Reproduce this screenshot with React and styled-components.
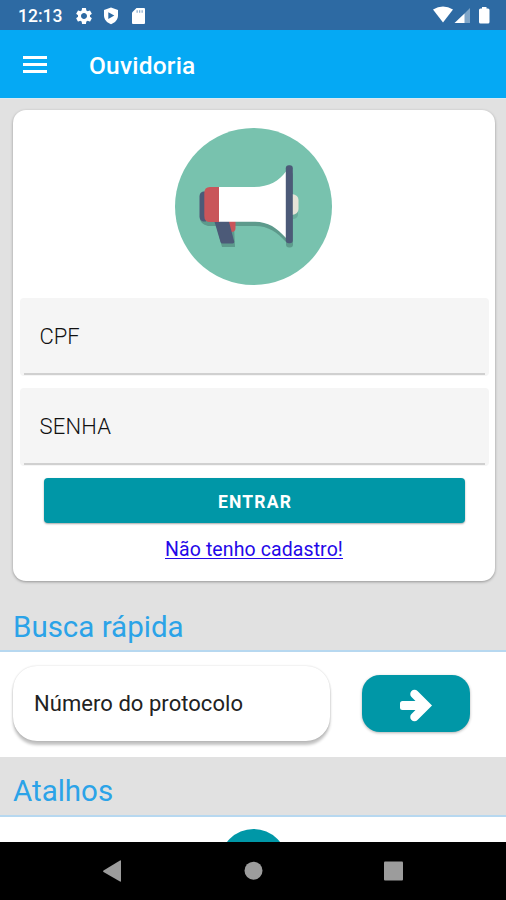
import React from 'react';
import styled, { createGlobalStyle } from 'styled-components';
import { MdSettings } from 'react-icons/md';

const App = () => {
  return (
    <>
      <GlobalStyle />
      <Screen>
        <StatusBar>
          <Clock>12:13</Clock>
          <StatusIcons>
            <MdSettings size={20} />
            <ShieldIcon />
            <SdIcon />
          </StatusIcons>
          <SignalIcons />
        </StatusBar>
        <AppBar>
          <MenuButton aria-label="Menu">
            <MenuLine />
            <MenuLine />
            <MenuLine />
          </MenuButton>
          <Title>Ouvidoria</Title>
        </AppBar>
        <Content>
          <LoginCard>
            <Megaphone />
            <Field>
              <Label>CPF</Label>
            </Field>
            <Field>
              <Label $spacing="0.2px">SENHA</Label>
            </Field>
            <EnterButton>ENTRAR</EnterButton>
            <SignUpLink href="#">Não tenho cadastro!</SignUpLink>
          </LoginCard>
          <SectionTitle $height={71} $pad={27}>Busca rápida</SectionTitle>
          <SearchRow>
            <ProtocolField>Número do protocolo</ProtocolField>
            <GoButton aria-label="Buscar">
              <ArrowIcon />
            </GoButton>
          </SearchRow>
          <SectionTitle $height={60} $pad={15}>Atalhos</SectionTitle>
          <Shortcuts>
            <ShortcutCircle />
          </Shortcuts>
        </Content>
        <NavBar>
          <svg width="506" height="58" viewBox="0 0 506 58" fill="#9c9c9c">
            <path d="M121 19v20q0 1-1 .5L103.500 30q-1-.8 0-1.600L120 18.500q1-.5 1 .5z" />
            <circle cx="253.500" cy="28.700" r="9" />
            <rect x="384" y="19.500" width="19" height="19" rx="1" />
          </svg>
        </NavBar>
      </Screen>
    </>
  )
}

const ShieldIcon = () => (
  <svg width="16" height="18" viewBox="0 0 16 18">
    <path d="M8 .5L15 3v5.500c0 4-3 7.300-7 8.700-4-1.400-7-4.700-7-8.700V3z" fill="#fff" />
    <path d="M5.300 5.300v6.600l6-3.300z" fill="#2d6aa3" />
  </svg>
)

const SdIcon = () => (
  <svg width="14" height="16" viewBox="-1 0 14 16">
    <path d="M4.500 0H12q1 0 1 1v14q0 1-1 1H1q-1 0-1-1V4.500z" fill="#fff" />
    <path d="M4.500 2.200h1.300v2.500H4.500zM7 2.200h1.300v2.500H7zM9.500 2.200h1.300v2.500H9.500z" fill="#8fb0cf" />
  </svg>
)

const SignalIcons = () => (
  <svg width="58" height="18" viewBox="0 0 58 18">
    <path d="M0 3.500Q10 -2.500 20 3.500L10 16.500z" fill="#fff" />
    <path d="M37 2v15h-6V8z" fill="#7fa5c8" />
    <path d="M31.500 7.500V17H21.500z" fill="#fff" />
    <path d="M49 1h4.500v1.500H55q1.500 0 1.500 1.500v12q0 1.500-1.500 1.500h-7.500q-1.500 0-1.500-1.500V4q0-1.500 1.500-1.500H49z" fill="#fff" />
  </svg>
)

const ArrowIcon = () => (
  <svg width="34" height="36" viewBox="0 0 34 36" fill="none" stroke="#fff">
    <rect x="1" y="14" width="22" height="9" rx="2.500" fill="#fff" stroke="none" />
    <path d="M15.500 7L27 18.500L15.500 30" strokeWidth="8.500" strokeLinecap="round" />
  </svg>
)

const Megaphone = () => (
  <Logo viewBox="0 0 157 157">
    <circle cx="78.500" cy="78.500" r="78.500" fill="#78c2ae" />
    {/* shadow */}
    <g fill="#5d9a8c">
      <path d="M30 67h48c16 0 26-6 33-15v62c-9-10-18-16-31-16H33q-8-2-8-8z" />
      <path d="M41 97h18l1 22H47z" />
      <rect x="111" y="44" width="7" height="75.500" rx="3" />
      <path d="M118 70h5v17q-1 4-5 4z" fill="#69ad9c" />
    </g>
    <path d="M52 92h8.500v8q0 4-4 4h-4.500z" fill="#c9555a" />
    <path d="M39.300 93h14.500l5.400 20.500q.5 2-1.700 2H47.500q-1.500 0-2-1.500z" fill="#4c5a78" />
    <path d="M31 63.500h-3q-3.500 1-3.500 5v20q0 4 3.500 5h3z" fill="#4c5a78" />
    <path d="M44.500 59H35q-5.700 0-5.700 6v23q0 6 5.700 6h9.500z" fill="#c9555a" />
    <path d="M44 59h34c16 0 26-6 33-15.500v66.500c-9-10-18-16.200-31-16.200H44z" fill="#fff" />
    <path d="M117 66q6.500 1 6.500 6v9q0 5-6.500 6z" fill="#e6e4d8" />
    <rect x="110.800" y="37.300" width="7" height="78" rx="3" fill="#4c5a78" />
  </Logo>
)

const GlobalStyle = createGlobalStyle`
  * {
    box-sizing: border-box;
  }
  body {
    margin: 0;
    font-family: Roboto, sans-serif;
    background: #e1e1e1;
  }
`;

const Screen = styled.div`
  width: 506px;
  height: 900px;
  display: flex;
  flex-direction: column;
  overflow: hidden;
  background: #e1e1e1;
`;

const StatusBar = styled.div`
  height: 30px;
  flex: none;
  display: flex;
  align-items: center;
  padding: 0 15px 0 18px;
  background: #2d6aa3;
  color: #fff;
`;

const Clock = styled.span`
  width: 56px;
  font-size: 17.500px;
  font-weight: 500;
  line-height: 30px;
  padding-top: 1px;
`;

const StatusIcons = styled.div`
  flex: 1;
  display: flex;
  align-items: center;
  gap: 12px;
  padding-top: 1px;

  svg:first-child {
    margin-right: -3px;
  }
`;

const AppBar = styled.header`
  height: 68px;
  flex: none;
  display: flex;
  align-items: center;
  padding: 3px 23px 0;
  background: #05a9f4;
`;

const MenuButton = styled.button`
  width: 24px;
  padding: 0;
  border: 0;
  background: none;
  display: flex;
  flex-direction: column;
  gap: 4px;
  margin-top: -2px;
`;

const MenuLine = styled.span`
  height: 3px;
  background: #fff;
`;

const Title = styled.h1`
  margin: -1px 0 0 42px;
  font-size: 24.500px;
  font-weight: 500;
  letter-spacing: 0.2px;
  color: #fff;
`;

const Content = styled.main`
  flex: 1;
  min-height: 0;
  overflow: hidden;
  border-top: 1px solid #d9eaf3;
`;

const LoginCard = styled.section`
  display: flex;
  flex-direction: column;
  align-items: center;
  height: 471px;
  margin: 11px 11px 0 13px;
  padding: 18px 7px 0;
  border-radius: 13px;
  background: #fff;
  box-shadow: 0 1px 3px rgba(0, 0, 0, 0.35);
`;

const Logo = styled.svg`
  width: 157px;
  height: 157px;
  flex: none;
  margin-bottom: 13px;
  margin-right: 1px;
`;

const Field = styled.div`
  width: 469px;
  height: 78px;
  flex: none;
  display: flex;
  flex-direction: column;
  padding: 0 4px 1px;
  margin-bottom: 12px;
  border-radius: 4px;
  background: #f5f5f5;

  &::after {
    content: '';
    height: 2px;
    flex: none;
    background: #d0d0d0;
  }
`;

const Label = styled.span`
  flex: 1;
  min-height: 0;
  padding-left: 16px;
  font-size: 22px;
  line-height: 77px;
  letter-spacing: ${props => props.$spacing || '0'};
  font-weight: 300;
  color: #111;
`;

const EnterButton = styled.button`
  width: 421px;
  height: 45px;
  flex: none;
  padding: 2px 0 0 2px;
  border: 0;
  border-radius: 4px;
  background: #0097a7;
  color: #fff;
  font: 700 17.500px Roboto, sans-serif;
  letter-spacing: 1.2px;
  box-shadow: 0 1px 2px rgba(0, 0, 0, 0.35);
`;

const SignUpLink = styled.a`
  margin-top: 15px;
  font-size: 19.500px;
  line-height: 24px;
  letter-spacing: 0.1px;
  color: #2408e8;
  text-decoration: underline;
  text-decoration-thickness: 1px;
  text-underline-offset: 2px;
`;

const SectionTitle = styled.h2`
  height: ${props => props.$height}px;
  margin: 0;
  padding: ${props => props.$pad}px 13px 0;
  border-bottom: 2px solid #b7d8f0;
  font-size: 29.500px;
  line-height: 38px;
  font-weight: 400;
  color: #2ba3e8;
`;

const SearchRow = styled.section`
  height: 105px;
  display: flex;
  align-items: flex-start;
  gap: 32px;
  padding: 14px 13px 0;
  background: #fff;
`;

const ProtocolField = styled.div`
  width: 317px;
  height: 75px;
  padding-left: 21px;
  border-radius: 24px;
  background: #fff;
  box-shadow: 0 4px 3px rgba(0, 0, 0, 0.24), 0 0 2px rgba(0, 0, 0, 0.18);
  font-size: 22px;
  line-height: 76px;
  letter-spacing: 0.05px;
  color: #222;
`;

const GoButton = styled.button`
  width: 108px;
  height: 57px;
  margin-top: 9px;
  padding: 3px 0 0;
  display: flex;
  align-items: center;
  justify-content: center;
  border: 0;
  border-radius: 18px;
  background: #0097a7;
  box-shadow: 0 1px 3px rgba(0, 0, 0, 0.3);
`;

const Shortcuts = styled.section`
  height: 100px;
  display: flex;
  justify-content: center;
  padding-top: 12px;
  background: #fff;
`;

const ShortcutCircle = styled.div`
  width: 67px;
  height: 67px;
  border-radius: 50%;
  background: #0097a7;
`;

const NavBar = styled.nav`
  height: 58px;
  flex: none;
  background: #000;
`;

export default App
